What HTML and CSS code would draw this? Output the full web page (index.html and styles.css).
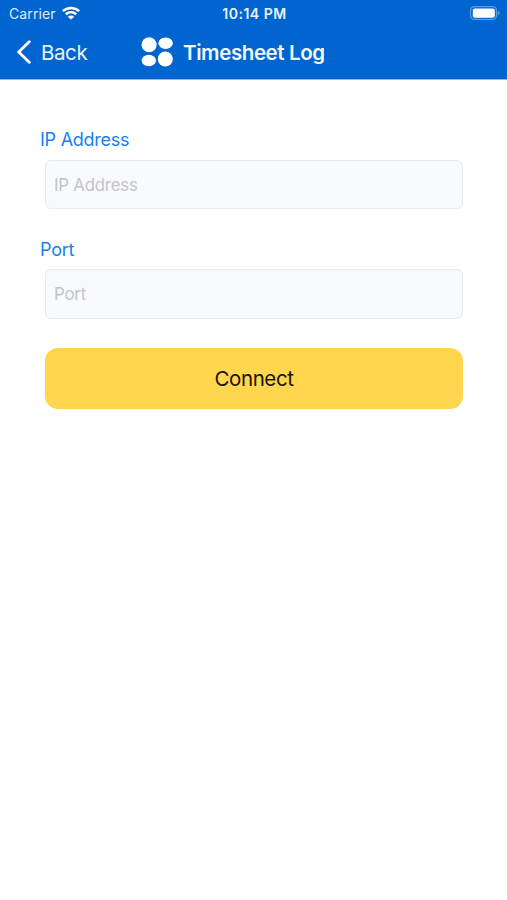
FILE: index.html
```html
<!DOCTYPE html>
<html lang="en">

<head>
    <meta charset="UTF-8">
    <meta name="viewport" content="width=device-width, initial-scale=1.0">
    <title>Timesheet Log</title>
    <link rel="stylesheet" href="styles.css">
</head>

<body>
    <header class="header">
        <div class="status-bar">
            <div class="carrier">
                <span>Carrier</span>
                <svg class="wifi" viewBox="0 0 18 14" width="18" height="14">
                    <path d="M.8 5.1C5.4 .8 12.6 .8 17.2 5.1M3.8 8.3C6.9 5.5 11.1 5.5 14.2 8.3" fill="none" stroke="#fff" stroke-width="2.5" />
                    <path d="M9 13.6L5.8 10.7C7.6 9.2 10.4 9.2 12.2 10.7Z" fill="#fff" />
                </svg>
            </div>
            <span class="time">10:14 PM</span>
            <svg class="battery" viewBox="0 0 30 14" width="30" height="14">
                <rect x=".6" y=".6" width="25.8" height="12.8" rx="3.6" fill="none" stroke="#5c9ce3" stroke-width="1.2" />
                <rect x="2.8" y="2.5" width="22" height="9.2" rx="2" fill="#fff" />
                <path d="M27.7 4.7C30.2 5.6 30.2 8.4 27.7 9.3Z" fill="#5c9ce3" />
            </svg>
        </div>

        <nav class="nav-bar">
            <a class="back-button">
                <svg viewBox="0 0 16 24" width="16" height="24">
                    <path d="M13.3 1.7L2.7 12L13.3 22.3" fill="none" stroke="#fff" stroke-width="2.9" stroke-linecap="round" stroke-linejoin="round" />
                </svg>
                <span>Back</span>
            </a>
            <div class="brand">
                <svg viewBox="0 0 32 30" width="32" height="30" fill="#fff">
                    <ellipse cx="8.1" cy="7.8" rx="7.6" ry="7.5" />
                    <ellipse cx="24.6" cy="6.2" rx="7.2" ry="5.8" />
                    <ellipse cx="7.8" cy="23.5" rx="7.2" ry="5.8" />
                    <ellipse cx="24.3" cy="22" rx="7.6" ry="7.6" />
                </svg>
                <h1 class="title">Timesheet Log</h1>
            </div>
        </nav>
    </header>

    <form class="connect-form">
        <label class="label" for="ipAddress">IP Address</label>
        <input class="input" type="text" id="ipAddress" placeholder="IP Address">

        <label class="label" for="port">Port</label>
        <input class="input" type="text" id="port" placeholder="Port">

        <button type="button" class="connect-button">Connect</button>
    </form>
</body>

</html>
```

FILE: styles.css
```css
:root {
    --primary-color: #0065ce;
    --label-color: #1581f2;
    --input-color: #f9fafe;
    --button-color: #ffd64d;
}

* {
    margin: 0;
    padding: 0;
    box-sizing: border-box;
}

body {
    font-family: Inter, 'Liberation Sans', sans-serif;
    background-color: #ffffff;
    min-height: 100vh;
}

.header {
    height: 80px;
    background-color: var(--primary-color);
    border-bottom: 1px solid #8abbec;
    color: white;
}

.status-bar {
    display: grid;
    grid-template-columns: 1fr auto 1fr;
    align-items: center;
    height: 26px;
    padding: 0 7px 0 9px;
    font-size: 14px;
    line-height: 28px;
}

.status-bar svg {
    margin-bottom: 2px;
}

.carrier {
    display: flex;
    align-items: center;
    gap: 6px;
    color: #dcecff;
    letter-spacing: 0.1px;
}

.time {
    font-size: 14px;
    font-weight: 600;
    letter-spacing: 0.5px;
    color: #e8f3ff;
}

.battery {
    justify-self: end;
}

.nav-bar {
    display: flex;
    align-items: center;
    height: 52px;
    padding-left: 16px;
}

.back-button {
    display: flex;
    align-items: center;
    gap: 9px;
    width: 125px;
    font-size: 20.5px;
    letter-spacing: -0.4px;
    color: #e8f3ff;
}

.brand {
    display: flex;
    align-items: center;
    gap: 10px;
}

.title {
    font-size: 20.5px;
    font-weight: 600;
    letter-spacing: -0.4px;
    color: #f2f8ff;
}

.connect-form {
    padding: 48px 44px 0 40px;
}

.label {
    display: block;
    height: 24px;
    line-height: 24px;
    font-size: 18px;
    letter-spacing: -0.25px;
    color: var(--label-color);
}

.input {
    display: block;
    width: 418px;
    height: 49px;
    margin: 8px 0 29px 5px;
    padding: 0 8px;
    font-family: inherit;
    font-size: 16.8px;
    letter-spacing: -0.2px;
    background-color: var(--input-color);
    border: 1px solid #e9eaed;
    border-radius: 6px;
    outline: none;
}

#port {
    height: 50px;
    margin-top: 7px;
}

.input::placeholder {
    color: #c3c4c8;
    opacity: 1;
}

.connect-button {
    display: block;
    width: 418px;
    height: 61px;
    margin-left: 5px;
    background-color: var(--button-color);
    color: #171400;
    font-family: inherit;
    font-size: 20.5px;
    letter-spacing: -0.4px;
    border: none;
    border-radius: 13px;
    cursor: pointer;
}
```
